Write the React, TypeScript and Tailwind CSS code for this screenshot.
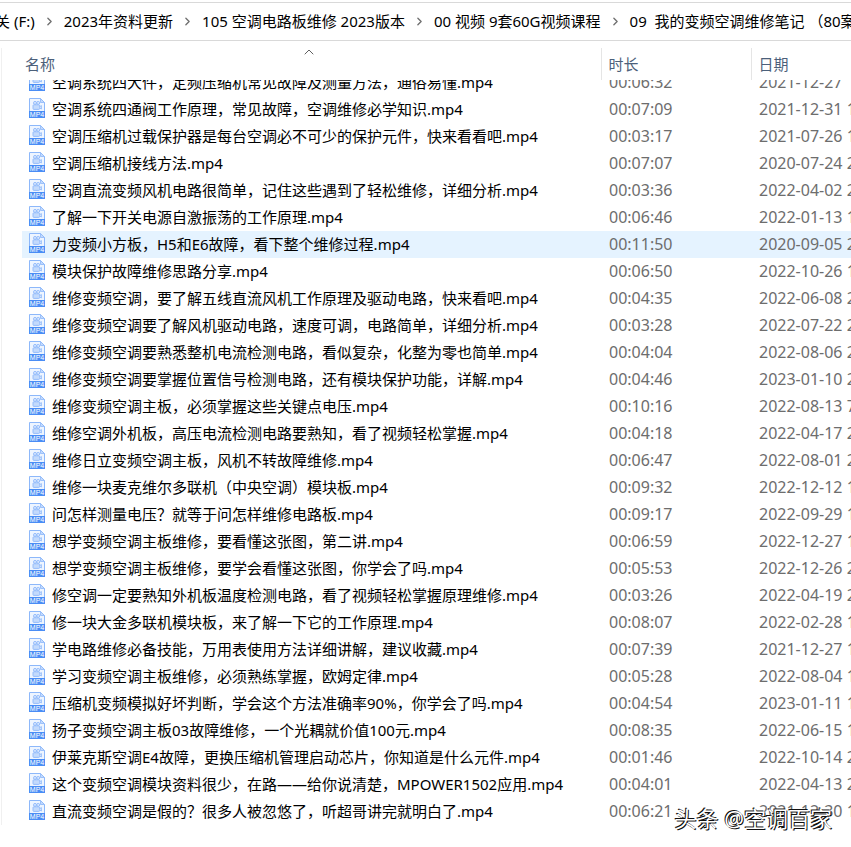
import clsx from 'clsx';
import { ChevronRight, ChevronUp } from 'lucide-react';

interface VideoFile {
  name: string;
  duration: string;
  date: string;
}

const PATH = [
  '关 (F:)',
  '2023年资料更新',
  '105 空调电路板维修 2023版本',
  '00 视频 9套60G视频课程',
  '09  我的变频空调维修笔记 （80案例）',
];

const FILES: VideoFile[] = [
  { name: '空调系统四大件，定频压缩机常见故障及测量方法，通俗易懂.mp4', duration: '00:06:32', date: '2021-12-27' },
  { name: '空调系统四通阀工作原理，常见故障，空调维修必学知识.mp4', duration: '00:07:09', date: '2021-12-31 1' },
  { name: '空调压缩机过载保护器是每台空调必不可少的保护元件，快来看看吧.mp4', duration: '00:03:17', date: '2021-07-26 1' },
  { name: '空调压缩机接线方法.mp4', duration: '00:07:07', date: '2020-07-24 2' },
  { name: '空调直流变频风机电路很简单，记住这些遇到了轻松维修，详细分析.mp4', duration: '00:03:36', date: '2022-04-02 2' },
  { name: '了解一下开关电源自激振荡的工作原理.mp4', duration: '00:06:46', date: '2022-01-13 1' },
  { name: '力变频小方板，H5和E6故障，看下整个维修过程.mp4', duration: '00:11:50', date: '2020-09-05 2' },
  { name: '模块保护故障维修思路分享.mp4', duration: '00:06:50', date: '2022-10-26 1' },
  { name: '维修变频空调，要了解五线直流风机工作原理及驱动电路，快来看吧.mp4', duration: '00:04:35', date: '2022-06-08 2' },
  { name: '维修变频空调要了解风机驱动电路，速度可调，电路简单，详细分析.mp4', duration: '00:03:28', date: '2022-07-22 2' },
  { name: '维修变频空调要熟悉整机电流检测电路，看似复杂，化整为零也简单.mp4', duration: '00:04:04', date: '2022-08-06 2' },
  { name: '维修变频空调要掌握位置信号检测电路，还有模块保护功能，详解.mp4', duration: '00:04:46', date: '2023-01-10 2' },
  { name: '维修变频空调主板，必须掌握这些关键点电压.mp4', duration: '00:10:16', date: '2022-08-13 7' },
  { name: '维修空调外机板，高压电流检测电路要熟知，看了视频轻松掌握.mp4', duration: '00:04:18', date: '2022-04-17 2' },
  { name: '维修日立变频空调主板，风机不转故障维修.mp4', duration: '00:06:47', date: '2022-08-01 2' },
  { name: '维修一块麦克维尔多联机（中央空调）模块板.mp4', duration: '00:09:32', date: '2022-12-12 1' },
  { name: '问怎样测量电压？就等于问怎样维修电路板.mp4', duration: '00:09:17', date: '2022-09-29 1' },
  { name: '想学变频空调主板维修，要看懂这张图，第二讲.mp4', duration: '00:06:59', date: '2022-12-27 1' },
  { name: '想学变频空调主板维修，要学会看懂这张图，你学会了吗.mp4', duration: '00:05:53', date: '2022-12-26 2' },
  { name: '修空调一定要熟知外机板温度检测电路，看了视频轻松掌握原理维修.mp4', duration: '00:03:26', date: '2022-04-19 2' },
  { name: '修一块大金多联机模块板，来了解一下它的工作原理.mp4', duration: '00:08:07', date: '2022-02-28 1' },
  { name: '学电路维修必备技能，万用表使用方法详细讲解，建议收藏.mp4', duration: '00:07:39', date: '2021-12-27 1' },
  { name: '学习变频空调主板维修，必须熟练掌握，欧姆定律.mp4', duration: '00:05:28', date: '2022-08-04 1' },
  { name: '压缩机变频模拟好坏判断，学会这个方法准确率90%，你学会了吗.mp4', duration: '00:04:54', date: '2023-01-11 1' },
  { name: '扬子变频空调主板03故障维修，一个光耦就价值100元.mp4', duration: '00:08:35', date: '2022-06-15 1' },
  { name: '伊莱克斯空调E4故障，更换压缩机管理启动芯片，你知道是什么元件.mp4', duration: '00:01:46', date: '2022-10-14 2' },
  { name: '这个变频空调模块资料很少，在路——给你说清楚，MPOWER1502应用.mp4', duration: '00:04:01', date: '2022-04-13 2' },
  { name: '直流变频空调是假的？很多人被忽悠了，听超哥讲完就明白了.mp4', duration: '00:06:21', date: '2021-12-30 1' },
];

const SELECTED = 6;

function Mp4Icon() {
  return (
    <svg width="16" height="20" viewBox="0 0 16 20" className="shrink-0" aria-hidden="true">
      <path d="M.5 .5H11.5L15.5 4.5V19.5H.5Z" fill="#eef5ff" stroke="#8db8fa" />
      <path d="M11.5 .5V4.5H15.5Z" fill="#c3dafc" stroke="#8db8fa" strokeWidth=".8" />
      <circle cx="6" cy="4.9" r="1.5" fill="#d7e7fe" stroke="#8db8fa" strokeWidth=".9" />
      <circle cx="9.2" cy="4.9" r="1.5" fill="#d7e7fe" stroke="#8db8fa" strokeWidth=".9" />
      <rect x="4" y="6.8" width="6.6" height="4.6" rx=".8" fill="#c3dafc" stroke="#8db8fa" strokeWidth=".9" />
      <path d="M10.6 8.8L12.4 7.6V11L10.6 10" fill="#d7e7fe" stroke="#8db8fa" strokeWidth=".8" />
      <rect y="13" width="16" height="7" fill="#4a8df5" />
      <text x="8" y="19" textAnchor="middle" fontSize="7" fill="#ffffff" className="font-['Liberation_Sans',sans-serif]">
        MP4
      </text>
    </svg>
  );
}

export default function App() {
  return (
    <div className="relative min-h-screen overflow-hidden bg-white pt-[2px] pb-[22px] font-['Noto_Sans','Noto_Sans_CJK_SC',sans-serif] text-[15px] text-black">
      <nav className="flex h-[39px] items-center overflow-hidden border-y border-[#d9d9d9] whitespace-pre">
        {PATH.map((folder, i) => (
          <div key={folder} className={clsx('flex shrink-0 items-center', i === 0 && '-ml-[5px]')}>
            {i > 0 && (
              <ChevronRight className="mx-2 shrink-0 text-[#707070]" size={13} strokeWidth={2.5} />
            )}
            <a href="#">{folder}</a>
          </div>
        ))}
      </nav>

      <main className="mt-[7px] ml-px overflow-hidden border-l border-[#f0f0f0]">
        <table className="w-full table-fixed border-collapse">
          <thead>
            <tr className="h-8 text-left text-[#4c607a]">
              <th className="relative w-[599px] p-0 pl-[23px] font-normal">
                名称
                <ChevronUp className="absolute -top-1 left-[299px] text-[#606060]" size={16} strokeWidth={1.5} />
              </th>
              <th className="w-[150px] border-l border-[#e5e5e5] p-0 pl-[7px] font-normal">时长</th>
              <th className="border-l border-[#e5e5e5] p-0 pl-[7px] font-normal">日期</th>
            </tr>
          </thead>
          <tbody>
            {FILES.map((file, i) => {
              // the first row is scrolled halfway under the header
              const cell = clsx(
                'flex items-end overflow-hidden whitespace-nowrap leading-[27px]',
                i === 0 ? 'h-4' : 'h-[27px]',
                i === SELECTED && 'bg-[#e5f3ff]',
              );
              return (
                <tr key={file.name}>
                  <td className="p-0 pl-5">
                    <div className={clsx(cell, 'gap-[7px] pl-[7px]')}>
                      <div className="flex h-[27px] items-start pt-0.5">
                        <Mp4Icon />
                      </div>
                      {file.name}
                    </div>
                  </td>
                  <td className="p-0 text-base text-[#6d6d6d]">
                    <div className={clsx(cell, 'pl-2')}>{file.duration}</div>
                  </td>
                  <td className="p-0 text-base text-[#6d6d6d]">
                    <div className={clsx(cell, 'pl-2')}>{file.date}</div>
                  </td>
                </tr>
              );
            })}
          </tbody>
        </table>
      </main>

      <p className="absolute right-[19px] bottom-[14px] text-[22px] leading-[30px] text-white [text-shadow:1px_1px_0_#111,-1px_-1px_0_#111]">
        头条 @空调百家
      </p>
    </div>
  );
}
